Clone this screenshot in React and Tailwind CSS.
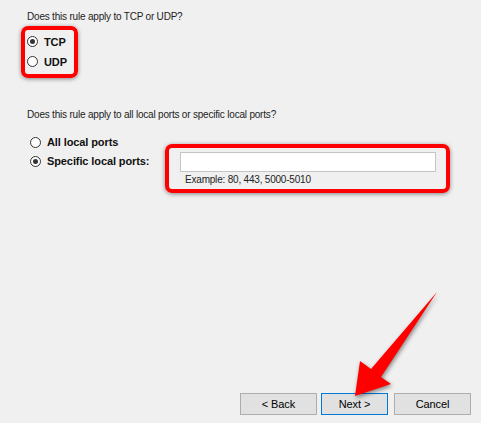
import React from "react";

function Radio({ checked }) {
  return (
    <span className="relative inline-block w-[11px] h-[11px] rounded-full border border-[#333] bg-white shrink-0">
      {checked && (
        <span className="absolute left-[2px] top-[2px] w-[5px] h-[5px] rounded-full bg-[#333]" />
      )}
    </span>
  );
}

function Btn({ children, focus, w }) {
  return (
    <div
      className={
        "h-[22px] flex items-center justify-center text-[11px] tracking-[-0.1px] text-black bg-[#e1e1e1] border " +
        (focus ? "border-[#0078d7] " : "border-[#adadad] ") +
        w
      }
    >
      {children}
    </div>
  );
}

const label = "text-[11px] font-bold leading-[12px] tracking-[-0.1px] text-[#111]";
const small = "text-[10px] leading-[14px] tracking-[-0.2px] text-[#222]";

export default function App() {
  return (
    <div className="relative w-[481px] h-[423px] bg-[#f0f0f0] overflow-hidden text-black font-['Liberation_Sans',Arial,sans-serif]">
      <div className={"pl-[27px] pt-[10px] " + small}>
        Does this rule apply to TCP or UDP?
      </div>
      <div className="ml-[21px] mt-[2px] w-[57px] h-[52px] border-4 border-[#ff0000] rounded-[7px] shadow-[0_1px_4px_rgba(0,0,0,0.45)] pt-[6px] pl-[2px] flex flex-col gap-[9px]">
        <div className="flex items-center gap-[6px] h-[11px]">
          <Radio checked />
          <span className={label}>TCP</span>
        </div>
        <div className="flex items-center gap-[6px] h-[11px]">
          <Radio />
          <span className={label}>UDP</span>
        </div>
      </div>
      <div className={"pl-[27px] mt-[30px] " + small}>
        Does this rule apply to all local ports or specific local ports?
      </div>
      <div className="pl-[30px] mt-[14px] flex items-center gap-[6px] h-[12px]">
        <Radio />
        <span className={label}>All local ports</span>
      </div>
      <div className="pl-[30px] mt-[-4px] flex items-start">
        <div className="flex items-center gap-[6px] h-[12px] mt-[11px] w-[135px]">
          <Radio checked />
          <span className={label}>Specific local ports:</span>
        </div>
        <div className="w-[285px] h-[49px] border-4 border-[#ff0000] rounded-[7px] shadow-[0_1px_4px_rgba(0,0,0,0.45)] pl-[11px] pt-[4px]">
          <div className="w-[256px] h-[20px] bg-white border border-[#c4c4c4]" />
          <div className={"pl-[5px] mt-[1px] " + small}>
            Example: 80, 443, 5000-5010
          </div>
        </div>
      </div>
      <div className="absolute left-[240px] top-[393px] flex">
        <Btn w="w-[77px]">&lt; Back</Btn>
        <div className="w-[4px]" />
        <Btn w="w-[67px]" focus>Next &gt;</Btn>
        <div className="w-[6px]" />
        <Btn w="w-[77px]">Cancel</Btn>
      </div>
      <svg
        className="absolute left-0 top-0 pointer-events-none"
        width="481"
        height="423"
        style={{ filter: "drop-shadow(1px 2px 2px rgba(0,0,0,0.45))" }}
      >
        <polygon
          points="437,292 381,377 391,384 355,396 360,361 371,369"
          fill="#ff0000"
        />
      </svg>
    </div>
  );
}
